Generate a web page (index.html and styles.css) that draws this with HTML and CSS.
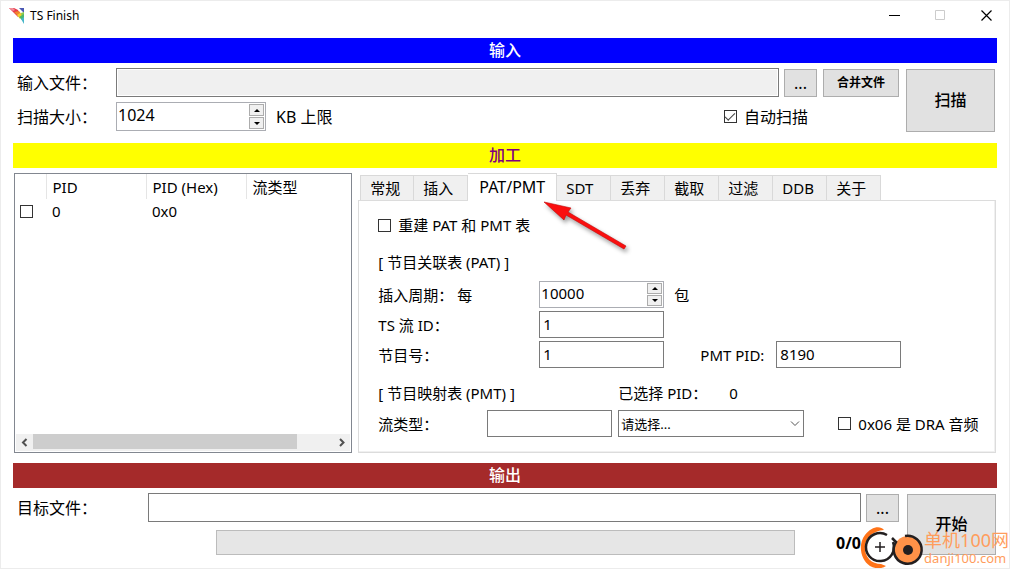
FILE: index.html
```html
<!DOCTYPE html>
<html lang="zh-CN">
<head>
<meta charset="utf-8">
<title>TS Finish</title>
<link rel="stylesheet" href="styles.css">
</head>
<body>
<div class="window">
  <header class="titlebar">
    <svg class="app-icon" width="16" height="16" viewBox="0 0 16 16" aria-hidden="true">
      <path d="M0 0h5l4 2 2 4-2 3-5-5z" fill="#e8384a"/><path d="M0 0h4l2 2-2 1z" fill="#f0909a"/>
      <path d="M5 4l5-1 3 4-3 2z" fill="#f0842c"/><path d="M8 7l3-2 3 1-3 5z" fill="#f2d02c"/>
      <path d="M10 0h5v5z" fill="#4a58b4"/><path d="M12 5l3-1v3l-2 2z" fill="#8cc850"/>
      <path d="M10 9l5-3v5l-2 1z" fill="#4cb86a"/><path d="M12 11l3-2v7z" fill="#46b6c8"/>
    </svg>
    <h1 class="title">TS Finish</h1>
    <button class="win-btn" aria-label="最小化"><svg width="11" height="11"><path d="M0 5.500h11" stroke="#000"/></svg></button>
    <button class="win-btn" aria-label="最大化" disabled><svg width="11" height="11"><path d="M.5.5h9v9h-9z" fill="none" stroke="#ccc"/></svg></button>
    <button class="win-btn" aria-label="关闭"><svg width="11" height="11"><path d="M.5.5l10 10M10.500.5l-10 10" stroke="#000" stroke-width="1.200"/></svg></button>
  </header>

  <main class="content">
    <h2 class="banner banner-in">输入</h2>
    <section class="block">
      <div class="rows">
        <div class="row">
          <label class="label" for="src">输入文件：</label>
          <input class="field readonly grow" id="src" type="text" readonly>
          <button class="btn browse">...</button>
          <button class="btn merge">合并文件</button>
        </div>
        <div class="row">
          <label class="label" for="size">扫描大小：</label>
          <span class="spinner spinner-wide">
            <input id="size" type="number" value="1024">
            <span class="arrows"><button class="arrow up" aria-label="增加"></button><button class="arrow down" aria-label="减少"></button></span>
          </span>
          <span class="unit">KB 上限</span>
          <label class="check auto-scan"><input type="checkbox" checked>自动扫描</label>
        </div>
      </div>
      <button class="btn big">扫描</button>
    </section>

    <h2 class="banner banner-work">加工</h2>
    <section class="work">
      <div class="list">
        <table class="pids">
          <thead><tr><th class="pick"></th><th>PID</th><th>PID (Hex)</th><th class="type">流类型</th></tr></thead>
          <tbody><tr><td class="pick"><input type="checkbox" aria-label="PID 0"></td><td>0</td><td>0x0</td><td></td></tr></tbody>
        </table>
        <div class="scrollbar">
          <button class="scroll-btn" aria-label="向左"><svg width="8" height="9"><path d="M5.500 1L2 4.500 5.500 8" fill="none" stroke="#505050" stroke-width="2"/></svg></button>
          <div class="track"><div class="thumb"></div></div>
          <button class="scroll-btn" aria-label="向右"><svg width="8" height="9"><path d="M2 1l3.500 3.500L2 8" fill="none" stroke="#505050" stroke-width="2"/></svg></button>
        </div>
      </div>

      <div class="tabs">
        <div class="tablist" role="tablist">
          <button class="tab" role="tab">常规</button>
          <button class="tab" role="tab">插入</button>
          <button class="tab active" role="tab" aria-selected="true">PAT/PMT</button>
          <button class="tab" role="tab">SDT</button>
          <button class="tab" role="tab">丢弃</button>
          <button class="tab" role="tab">截取</button>
          <button class="tab" role="tab">过滤</button>
          <button class="tab" role="tab">DDB</button>
          <button class="tab" role="tab">关于</button>
        </div>
        <div class="panel" role="tabpanel">
          <label class="check rebuild"><input type="checkbox">重建 PAT 和 PMT 表</label>
          <h3 class="group">[ 节目关联表 (PAT) ]</h3>
          <div class="form">
            <div class="row">
              <label class="form-label" for="period">插入周期： 每</label>
              <span class="spinner">
                <input id="period" type="number" value="10000">
                <span class="arrows"><button class="arrow up" aria-label="增加"></button><button class="arrow down" aria-label="减少"></button></span>
              </span>
              <span class="unit">包</span>
            </div>
            <div class="row">
              <label class="form-label" for="tsid">TS 流 ID：</label>
              <input class="field short" id="tsid" type="text" value="1">
            </div>
            <div class="row">
              <label class="form-label" for="prog">节目号：</label>
              <input class="field short" id="prog" type="text" value="1">
              <label class="pmt-label" for="pmt">PMT PID:</label>
              <input class="field short" id="pmt" type="text" value="8190">
            </div>
          </div>
          <div class="row pmt-head">
            <h3 class="group">[ 节目映射表 (PMT) ]</h3>
            <span class="selected-label">已选择 PID：</span>
            <output>0</output>
          </div>
          <div class="row pmt-row">
            <label class="type-label" for="stype">流类型：</label>
            <input class="field short" id="stype" type="text">
            <span class="select">
              <select aria-label="流类型选择"><option>请选择...</option></select>
              <svg class="chevron" width="10" height="6"><path d="M1 .5l4 4 4-4" fill="none" stroke="#555"/></svg>
            </span>
            <label class="check dra"><input type="checkbox">0x06 是 DRA 音频</label>
          </div>
        </div>
      </div>
    </section>

    <h2 class="banner banner-out">输出</h2>
    <section class="block out">
      <div class="rows">
        <div class="row">
          <label class="label out-label" for="dst">目标文件：</label>
          <input class="field grow" id="dst" type="text">
          <button class="btn browse">...</button>
        </div>
        <div class="row progress-row">
          <div class="progress" role="progressbar" aria-label="进度"></div>
          <span class="count">0/0</span>
        </div>
      </div>
      <button class="btn big start">开始</button>
    </section>
  </main>

  <svg class="pointer" width="100" height="60" viewBox="0 0 100 60" aria-hidden="true">
    <path d="M4 2l27 6-3 4 58 34-2 3-58-34-2 5z" fill="#fa0f0f" stroke="#c40808" stroke-width=".6"/>
  </svg>

  <div class="watermark">
    <svg width="64" height="44" viewBox="0 0 64 44" aria-hidden="true">
      <path d="M24 4C20-1 11 1 5 9c-7 9-5 24 5 31 5 3 12 3 16 0l-5-2C11 38 4 30 5 20 6 11 13 5 24 4z" fill="#ff7318"/>
      <circle cx="20" cy="21" r="14" fill="#fff"/>
      <path d="M27 9a14 14 0 1 0 6 7" fill="none" stroke="#231f20" stroke-width="2.500"/>
      <path d="M15 21h10M20 16v10" stroke="#231f20" stroke-width="1.500"/>
      <circle cx="48" cy="24" r="14" fill="#ff9248"/>
      <path d="M45 10a14 14 0 1 1-9 6l-4-4" fill="none" stroke="#231f20" stroke-width="2.500"/>
      <circle cx="48" cy="24" r="5" fill="#231f20"/>
    </svg>
    <div class="mark-text"><span class="mark-name">单机100网</span><span class="mark-url">danji100.com</span></div>
  </div>
</div>
</body>
</html>
```
FILE: styles.css
```css
* { box-sizing: border-box; }
body { margin: 0; background: #fff; color: #000; font: 15px/20px "Noto Sans", "Noto Sans CJK SC", sans-serif; }
button, input, select { font: inherit; color: inherit; margin: 0; }
h1, h2, h3 { margin: 0; font-size: inherit; font-weight: normal; }
.window { position: relative; min-height: 100vh; border: 1px solid #ececec; overflow: hidden; }
.titlebar { display: flex; align-items: center; height: 29px; padding: 0 0 0 8px; }
.title { flex: 1; margin-left: 5px; font-size: 12px; }
.win-btn { display: grid; place-items: center; width: 46px; height: 28px; padding: 0; border: 0; background: none; }
.content { padding: 8px 12px 12px; }
.banner { height: 25px; line-height: 25px; font-size: 16px; font-weight: 500; text-align: center; }
.banner-in { background: #00f; color: #fff; }
.banner-work { background: #ff0; color: #800080; }
.banner-out { background: #a52a2a; color: #fff; }
.block { display: flex; gap: 7px; padding: 5px 2px 11px 0; font-size: 16px; }
.rows { flex: 1; display: flex; flex-direction: column; gap: 5px; }
.row { display: flex; align-items: center; }
.label { width: 103px; padding-left: 4px; }
.field { height: 29px; padding: 0 3px 2px; border: 1px solid #7a7a7a; border-radius: 0; background: #fff; min-width: 0; }
.readonly { background: #f0f0f0; box-shadow: inset 0 0 0 1px #fff; }
.grow { flex: 1; }
.btn { padding: 0; border: 1px solid #adadad; background: #e1e1e1; }
.browse { width: 33px; height: 28px; margin-left: 5px; }
.merge { width: 76px; height: 28px; margin-left: 6px; font-size: 12px; font-weight: 700; }
.big { width: 89px; height: 63px; margin-top: 1px; padding-bottom: 2px; font-weight: 500; }
.start { height: 61px; }
.spinner { display: flex; width: 125px; height: 27px; border: 1px solid #abadb3; background: #fff; }
.spinner-wide { width: 150px; height: 29px; }
.spinner input { flex: 1; min-width: 0; padding: 0 0 3px 1px; border: 0; appearance: textfield; -moz-appearance: textfield; }
.spinner input::-webkit-inner-spin-button { appearance: none; -webkit-appearance: none; margin: 0; }
.arrows { display: flex; flex-direction: column; gap: 1px; padding: 1px; }
.arrow { flex: 1; display: grid; place-items: center; width: 15px; min-height: 0; padding: 0; border: 1px solid #acacac; background: #f0f0f0; }
.arrow::before { content: ""; border: 3px solid transparent; }
.up::before { border-top: 0; border-bottom-color: #000; }
.down::before { border-bottom: 0; border-top-color: #000; }
.unit { margin-left: 10px; }
.check { display: flex; align-items: center; gap: 7px; white-space: nowrap; }
input[type="checkbox"] { appearance: none; display: grid; place-items: center; width: 13px; height: 13px; border: 1px solid #333; background: #fff; }
input[type="checkbox"]:checked::before { content: ""; width: 9px; height: 4px; border: solid #444; border-width: 0 0 1px 1px; transform: translateY(-1px) rotate(-45deg); }
.auto-scan { margin: 0 91px 0 auto; }

.work { display: flex; gap: 6px; padding: 5px 1px 10px; }
.list { flex: 337; display: flex; flex-direction: column; min-width: 0; border: 1px solid #828790; }
.pids { width: 100%; border-collapse: collapse; table-layout: fixed; }
.pids th, .pids td { height: 24px; padding: 0 0 0 6px; font-weight: normal; text-align: left; width: 100px; }
.pids th { height: 25px; border-right: 1px solid #e5e5e5; }
.pids th.type { width: auto; border: 0; }
.pids .pick { width: 31px; padding-left: 5px; }
.scrollbar { display: flex; height: 17px; margin: auto 1px 1px; background: #f0f0f0; }
.scroll-btn { display: grid; place-items: center; width: 17px; padding: 0; border: 0; background: none; }
.track { flex: 1; }
.thumb { width: 88%; height: 15px; background: #cdcdcd; }

.tabs { flex: 639; min-width: 0; }
.tablist { display: flex; align-items: flex-end; height: 27px; padding-left: 2px; }
.tab { min-width: 54px; height: 25px; padding: 0 9px 1px; border: 1px solid #d9d9d9; border-bottom: 0; border-left-width: 0; background: #f0f0f0; text-align: left; white-space: nowrap; }
.tab:first-child { border-left-width: 1px; }
.tab.active { position: relative; z-index: 1; height: 28px; margin-bottom: -1px; padding: 0 11px 2px; background: #fff; font-size: 16px; }
.panel { padding: 14px 8px 15px 19px; border: 1px solid #dcdcdc; box-shadow: inset -1px -1px #f0f0f0; }
.rebuild { height: 20px; }
.group { margin-top: 17px; }
.form { display: grid; gap: 3px; margin-top: 9px; }
.form-label { width: 161px; white-space: pre; }
.short { width: 125px; height: 27px; }
.pmt-label { width: 76px; margin-left: 36px; }
.pmt-head { margin-top: 15px; }
.pmt-head .group { width: 240px; margin: 0; }
.selected-label { width: 111px; }
.pmt-row { margin-top: 7px; }
.type-label { width: 109px; }
.select { display: grid; align-items: center; width: 186px; margin-left: 6px; }
.select select { grid-area: 1 / 1; width: 100%; height: 27px; padding: 0 2px; border: 1px solid #7a7a7a; border-radius: 0; appearance: none; background: #fff; font-size: 13px; }
.chevron { grid-area: 1 / 1; justify-self: end; margin-right: 4px; pointer-events: none; }
.dra { margin-left: 34px; }

.out { padding-bottom: 0; gap: 8px; padding-right: 1px; }
.out .rows { gap: 8px; }
.out-label { width: 135px; }
.progress-row { padding: 0 38px 0 203px; }
.progress { flex: 1; height: 25px; border: 1px solid #bcbcbc; background: #e6e6e6; }
.count { margin-left: 41px; font-weight: 700; }

.pointer { position: absolute; left: 539px; top: 199px; filter: drop-shadow(2px 3px 2px #999); pointer-events: none; }
.watermark { position: absolute; right: 0; bottom: -2px; display: flex; align-items: center; color: #ff9d5c; pointer-events: none; }
.mark-text { display: flex; flex-direction: column; }
.mark-name { font-size: 18px; }
.mark-url { font-size: 13px; line-height: 17px; }
```
